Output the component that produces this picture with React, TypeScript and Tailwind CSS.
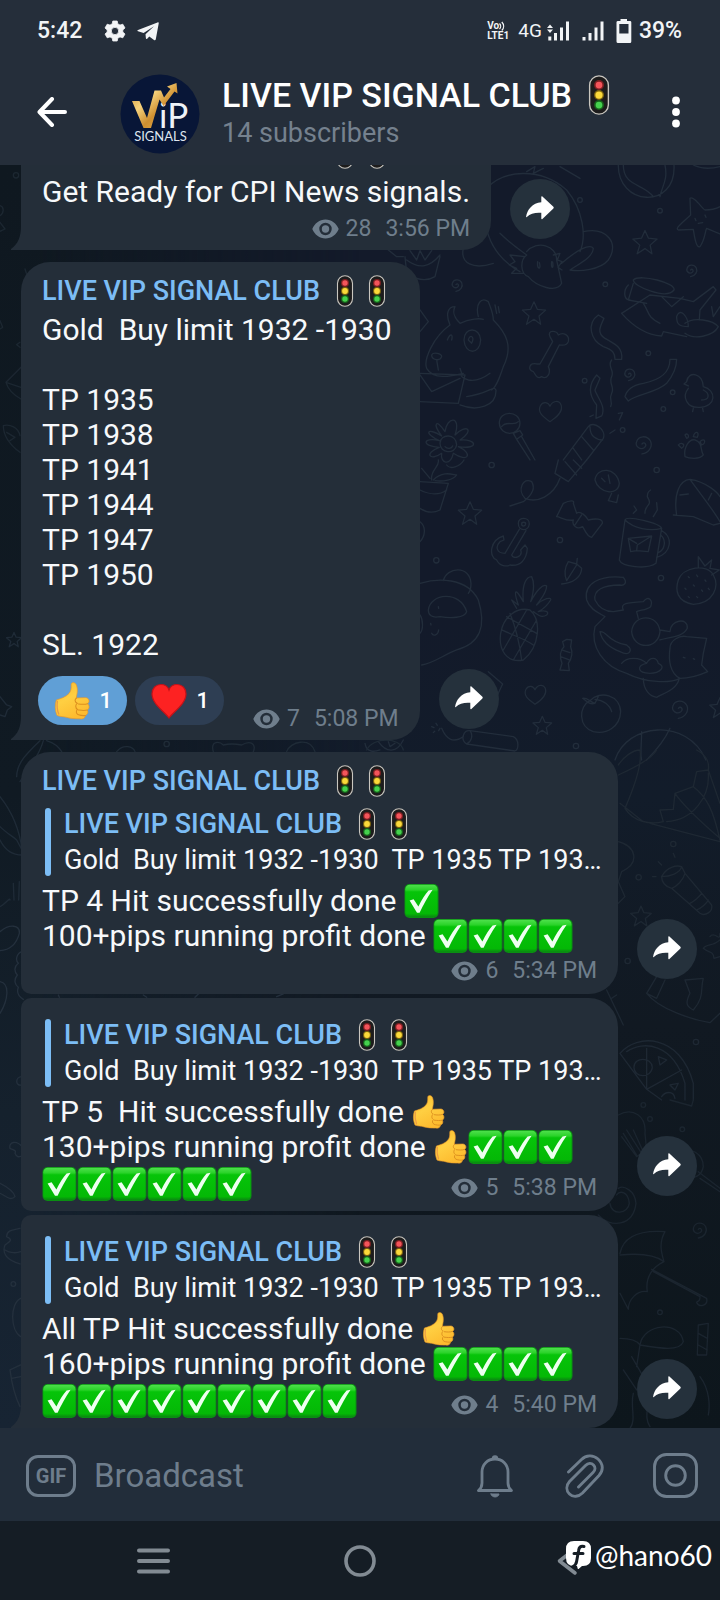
import type { ReactNode } from "react";

const CHANNEL = "LIVE VIP SIGNAL CLUB";

/* ---------- emoji ---------- */

const TrafficLight = ({ className }: { className: string }) => (
  <svg viewBox="0 0 32 32" className={className} role="img" aria-label="traffic light">
    <rect x="8.5" y="0.7" width="15" height="30.6" rx="7.5" fill="#1d1c1c" stroke="#c9c6bf" strokeWidth="1.1" />
    <circle cx="16" cy="8" r="4" fill="#7c1f22" />
    <circle cx="16" cy="8" r="2.7" fill="#f4545a" />
    <circle cx="16" cy="16" r="4" fill="#7d6410" />
    <circle cx="16" cy="16" r="2.9" fill="#fbd93a" />
    <circle cx="16" cy="24" r="4" fill="#17611b" />
    <circle cx="16" cy="24" r="2.7" fill="#45d14d" />
  </svg>
);

const Check = () => (
  <svg viewBox="0 0 35 34" className="inline-block h-[34px] w-[35px] align-[-7px]" role="img" aria-label="check mark">
    <defs>
      <linearGradient id="check-fill" x1="0" y1="0" x2="0" y2="1">
        <stop offset="0" stopColor="#4ee04c" />
        <stop offset="0.16" stopColor="#2ad329" />
        <stop offset="0.22" stopColor="#06c409" />
        <stop offset="0.9" stopColor="#04b806" />
        <stop offset="1" stopColor="#0a8a10" />
      </linearGradient>
    </defs>
    <rect x="0.5" y="0" width="34" height="34" rx="5" fill="#0a8f12" />
    <rect x="1.3" y="0.8" width="32.2" height="32" rx="4.5" fill="url(#check-fill)" />
    <path d="M5.6 16.6 9.6 15.2 14.4 22.6C17.6 15.8 21 10.6 24.6 6.6L28.6 5.8C23.6 13 19.4 20.6 15.6 28.8L13 28.8Z" fill="#eefff0" />
  </svg>
);

const ThumbsUp = ({ className = "inline-block h-[34px] w-[35px] align-[-7px]" }: { className?: string }) => (
  <svg viewBox="-1 -1 107 112" className={className} role="img" aria-label="thumbs up">
    <defs>
      <linearGradient id="thumb-fill" x1="0" y1="0" x2="0.5" y2="1">
        <stop offset="0" stopColor="#f9b92c" />
        <stop offset="0.5" stopColor="#ffcf42" />
        <stop offset="1" stopColor="#fdbb2f" />
      </linearGradient>
    </defs>
    <path
      d="M6 52C18 48 34 44 44 32C51 24 50 14 50 7C50 -2 62 -2 66 8C71 22 67 36 65 46L93 45C103 45 107 58 99 63C105 67 105 78 98 82C102 88 99 96 92 98C92 106 84 110 76 108C62 108 48 107 38 104C28 101 18 102 8 98C2 84 1 66 6 52Z"
      fill="url(#thumb-fill)"
      stroke="#e8962a"
      strokeWidth="2"
    />
    <path d="M99 63C90 66 80 65 72 64M98 82C90 84 80 83 72 82M92 98C86 99 78 98 72 96M66 46C60 50 60 58 68 62C62 66 62 76 69 80C64 84 64 92 70 95" fill="none" stroke="#dc8f1f" strokeWidth="3.2" strokeLinecap="round" />
    <path d="M9 56C7 70 9 84 13 94" fill="none" stroke="#e99a45" strokeWidth="4" strokeLinecap="round" />
  </svg>
);

const Heart = () => (
  <svg viewBox="0 0 36 36" className="h-9 w-9" role="img" aria-label="heart">
    <path d="M18 35C14 29 1 21 1 11C1 5 5 1.500 10 1.500C14 1.500 17 4 18 7C19 4 22 1.500 26 1.500C31 1.500 35 5 35 11C35 21 22 29 18 35Z" fill="#fd2222" stroke="#c41218" strokeWidth="1.2" />
  </svg>
);

/* ---------- wallpaper ---------- */

const star = "M0-13 4-4 14-3 6 4 8 14 0 8-9 14-6 4-14-3-4-4Z";
const spiral = "M0 0C5-6 11 2 5 7C-3 13-14 5-11-4C-7-17 10-18 17-6C22 5 14 18 0 20";
const heart = "M0 22C-14 12-24 4-18-8C-13-17-3-15 0-7C5-18 17-19 21-9C25 4 12 14 0 22Z";

const Wallpaper = () => (
  <svg
    viewBox="0 165 720 1263"
    preserveAspectRatio="xMaxYMin slice"
    className="pointer-events-none absolute inset-0 h-full w-full"
    fill="none"
    stroke="#222d3b"
    strokeWidth="4"
    strokeLinejoin="round"
    strokeLinecap="round"
    aria-hidden="true"
  >
    <g transform="translate(360 160) scale(.3333)">
      {/* turtle */}
      <path d="M380 85C430 30 540 20 620 90C670 150 680 230 660 275M500 35 525 20 520 40 550 25M600 20 660 55M380 85C360 180 380 280 480 335M310 265C300 310 340 330 400 310M670 215C740 200 780 250 745 300C720 330 660 335 630 330C660 310 700 290 700 265C690 250 650 270 605 310M420 220C450 250 480 270 500 285M500 275C530 240 590 255 590 300L605 370C590 400 530 380 505 350C480 340 480 300 500 285M495 290 450 285 465 305 448 315 470 325 455 340 490 340M580 285 600 280 592 300 606 305 594 322 606 330M533 305C530 330 545 330 538 308M575 305C572 328 582 328 578 306" />
      {/* ball, starfish, jar fish */}
      <path d="M775 10C770 140 950 150 942 15M790 15C790 80 850 70 880 110M915 15C925 60 905 80 900 110M1000 15C1030 30 1060 25 1080 20" />
      <path d="M990 115C1000 105 1030 150 1035 150C1060 150 1080 140 1080 140M990 115 992 165C960 195 945 205 955 210L1000 208C1005 240 1010 265 1020 260C1035 240 1035 215 1040 205L1080 222M1005 175 1008 182M1035 165 1038 172M1015 190 1028 188" />
      <path d="M820 360C840 340 950 370 942 390C920 420 820 380 820 360ZM820 370 805 420 860 430M805 375C790 390 790 420 810 420M785 460 870 405 960 415 1000 425 1060 380 1068 390 1020 450 1018 480M785 460C820 500 860 525 905 528L910 515 980 530M850 430C870 460 860 470 900 490M950 470C960 440 985 470 985 500 955 500 950 490 950 470ZM975 490C1000 470 1060 480 1075 500 1060 530 1000 540 975 520M905 410 935 440 970 410M1055 440 1060 470 1080 440" />
      {/* bear */}
      <path d="M270 495C255 460 265 440 285 440C275 460 285 475 300 490M270 495C220 530 190 600 200 625C220 660 270 650 310 640M355 470C345 430 365 410 385 425C395 450 400 460 400 480C440 520 460 560 430 620C420 650 410 680 395 690M300 490C330 475 360 475 370 478M215 585C220 575 245 580 245 590 240 605 215 600 215 585ZM230 600 235 630M312 540C312 500 360 500 362 540 360 585 315 585 312 540ZM325 540C330 520 345 530 335 550ZM262 540C270 520 280 520 275 540M300 625 305 640C300 650 310 655 325 660C350 665 370 655 390 640M180 640 315 645 295 730 180 725M180 645 215 695 300 655M300 735C350 755 410 740 408 690 400 675 390 700 320 710M180 450 205 485 180 515M405 435 410 460M415 440 418 458" />
      {/* bone, heart, streamers */}
      <path d="M570 530C560 510 590 510 595 525C610 515 630 525 625 545C620 560 605 555 598 555L565 620C575 640 560 660 545 650C530 660 525 640 520 635C500 630 510 605 530 612L540 612 578 545Z" />
      <path d="M715 465C680 490 690 540 730 560C760 570 765 580 765 598L785 598C790 560 760 550 735 535C710 520 720 500 732 475ZM930 598C930 640 900 660 850 670C820 675 800 690 795 710L805 723C830 700 890 700 920 670C945 640 950 620 950 598ZM710 645C680 680 690 710 710 735L708 775 725 768C740 740 710 710 705 690L720 655ZM755 600C740 620 765 630 755 650C745 670 765 680 755 700C745 720 760 725 752 740M775 760 788 758 778 780M690 770 700 765M750 820 765 810" />
      <path d="M980 665C985 630 1030 640 1030 680C1070 690 1070 740 1020 742C980 745 965 710 985 685M980 665 972 672 985 678M1000 745 998 755M1028 745 1030 755M1030 690C1050 700 1050 720 1025 720" />
      {/* flower, lollipop, firecracker, paw */}
      <path d="M240 850C240 820 290 820 290 855 285 885 240 880 240 850ZM245 828C215 790 230 775 255 815 260 770 305 765 285 825 320 790 345 810 300 840 350 835 360 870 295 860 340 880 325 910 280 880 270 920 240 910 245 880 210 905 190 880 238 862 185 860 185 830 238 842 190 820 200 800 245 828ZM255 860C262 868 275 866 278 858" />
      <path d="M418 790C418 750 478 750 480 790 478 830 420 830 418 790ZM425 800C440 780 460 800 475 785M460 820 480 812 488 825 470 838ZM470 838 510 900M485 830 525 900M610 900 685 800C700 780 740 810 730 835L680 900M640 865 665 900M665 830 700 870M690 800C690 830 710 840 728 840" />
      <path d="M975 890C970 860 990 835 1005 840C1030 850 1020 870 1030 885C1020 900 985 895 975 890ZM955 855C965 845 980 855 965 865ZM975 825C985 815 990 835 980 835ZM1000 830C1005 810 1020 815 1012 832ZM1020 845C1035 830 1040 850 1025 855Z" />
      <path d="M85 270 110 290 130 290M135 290 140 340C170 360 200 365 225 350L240 290M140 300C180 330 210 320 240 285M150 272 170 300 180 272 195 300 215 272" />
      <path transform="translate(855 245) scale(2.600)" d={star} strokeWidth="1.500" />
      <path transform="translate(522 458) scale(2.500)" d={star} strokeWidth="1.500" />
      <path transform="translate(570 750) scale(1.600)" d={heart} strokeWidth="2.300" />
      <path transform="translate(288 374)" d={spiral} />
      <path transform="translate(992 330)" d={spiral} />
      <path transform="translate(806 642)" d={spiral} />
      <path transform="translate(846 852) scale(1.500)" d={spiral} strokeWidth="2.600" />
      {[[660, 120], [900, 152], [736, 373], [865, 580], [674, 662], [910, 747], [938, 697], [788, 810]].map(([x, y]) => (
        <circle key={`${x}-${y}`} cx={x} cy={y} r="7" />
      ))}
    </g>
    <g transform="translate(360 460) scale(.3333)">
      {/* cactus pot, firecracker tail, fish, shell */}
      <path d="M180 65 265 70 240 150C220 160 200 158 180 145M180 90C210 105 240 105 260 90M215 60C210 30 240 20 235 0M220 60C250 30 280 45 290 45 280 60 250 65 225 62M210 55 185 25M260 15C270 30 300 20 312 0M180 185C200 200 195 230 180 245" />
      <path d="M595 0 585 40 625 65 680 0M615 5 650 45M640 0 665 25M600 55C580 110 530 130 495 115C470 90 490 50 515 65C530 90 510 110 490 125L450 138" />
      <path d="M705 60C710 20 770 20 778 70 775 110 715 100 705 60ZM755 100 745 122 770 128 775 105M725 55 735 65M745 45 750 70M950 165C940 100 960 60 990 58C1040 65 1075 100 1080 110M990 58C1020 100 1060 150 1080 185M940 165 1000 170 1060 195 1080 190M960 105 985 102M1045 120 1055 100" />
      {/* anchor, bow, mug */}
      <path d="M475 190C475 170 508 170 508 192 505 215 475 215 475 190ZM485 192C485 185 497 185 497 192 496 200 485 200 485 192ZM478 208 435 280C410 280 405 260 420 245L432 240 430 228C390 240 385 290 410 300C420 320 440 320 450 315 480 320 500 300 502 265L495 255 482 270C490 290 460 300 455 285L498 212" />
      <path d="M590 170 610 130C630 120 645 120 640 130L650 160C660 150 680 170 685 180 705 175 730 175 727 190L695 232C680 230 675 210 668 200 650 210 635 195 640 180 620 185 600 170 590 170ZM665 165 645 195" />
      <path d="M795 180C800 165 900 190 905 205L888 310C860 330 785 320 778 300ZM795 180C820 205 870 215 905 205M905 212C940 230 935 280 890 292M902 225C920 240 915 270 895 278M805 235 875 228 865 275 830 272 812 275ZM830 272 832 255 875 228M805 235 830 250M820 160 830 150 822 138M855 160C855 130 880 140 862 110 862 95 868 92 872 90M880 170 892 150 890 128" />
      {/* panda, leaf, pineapple */}
      <path d="M180 370C230 355 320 350 355 420C380 500 360 550 290 570 250 585 220 610 185 615M250 362C260 320 330 315 333 370 333 390 330 395 325 400M205 450C210 400 300 390 320 455 315 475 270 475 240 470 215 475 205 465 205 450ZM180 465C190 480 190 510 180 520M215 520C220 530 235 525 236 510M235 440 236 445M212 490 213 495" />
      <path d="M605 372C640 370 665 350 665 325L650 312 652 295M650 312 625 305C610 330 615 350 620 362L650 315" />
      <path d="M422 520C430 470 470 440 510 450 545 480 540 560 490 600 440 610 415 570 422 520ZM440 470 530 520M425 510C470 530 500 540 520 555M450 460C470 510 480 560 485 600M500 450 430 570M530 480 460 600M470 445 455 420 475 435C460 390 465 380 490 425 485 370 500 350 515 350 525 370 520 400 512 425 530 390 550 370 560 378 560 400 540 420 530 435 550 415 575 410 572 420 560 440 545 450 535 455 555 450 570 455 560 465 545 475 535 465 520 455" />
      {/* strawberry, cat */}
      <path d="M955 360C970 320 1040 310 1060 345 1080 380 1060 430 1000 433 950 425 945 390 955 360ZM1015 322 1015 290 1035 318 1055 300 1050 325 1078 330 1055 345M985 350 988 353M1010 345 1013 350M1035 360 1038 364M975 385 978 388M1000 375 1003 378M1025 390 1028 394M1045 385 1048 389M985 410 988 413M1010 410 1013 413" />
      <path d="M790 352C720 345 670 370 680 420C690 450 720 460 735 470L705 500C690 560 730 620 800 640C860 670 930 670 960 655M790 352C805 370 790 378 780 375 730 375 700 390 705 420 720 450 745 455 760 455L790 450C780 430 800 428 850 425 865 405 880 420 872 440 860 450 840 450 830 455L835 475M720 515C740 510 740 545 800 555 820 570 810 590 780 575 740 560 725 540 720 515ZM815 515C820 460 895 460 900 515 895 570 820 570 815 515ZM900 510 930 515C930 480 985 470 982 505 970 530 935 530 900 540M930 565C930 540 960 525 980 530L1040 535 1030 580 1025 615 1043 635C1010 650 980 655 960 655 930 640 925 600 930 565ZM850 655C850 690 870 710 890 712 910 700 950 690 958 655M860 610C870 590 890 590 895 610 920 620 900 640 870 640 830 640 830 615 860 610ZM785 610C800 590 840 590 860 610M970 592 975 594M1000 596 1004 598" />
      {/* candy, heart, peach, beach ball, scroll */}
      <path d="M608 545 620 538 635 540 632 560C640 580 632 600 625 610L628 632 600 630 606 610C598 590 600 570 612 560ZM605 570 630 578M602 590 628 600M690 722C720 690 780 705 782 755 780 800 740 825 700 815 655 800 655 740 690 722ZM705 730C690 725 680 712 668 715 680 725 690 735 705 730ZM705 730 715 710M705 718C730 720 750 735 755 755M765 900C800 790 980 770 1038 900M845 815C845 850 840 880 845 900M930 805C910 850 880 880 860 900" />
      <path d="M330 812 460 830C480 840 475 870 465 873L320 852C300 840 310 810 330 812ZM330 812C340 825 335 845 320 852M310 830C280 850 260 840 245 805M385 635 428 672 405 720M215 800 222 803M228 790 232 796M240 805 236 812M220 818 224 814M15 850C20 880 45 875 60 870M55 845C80 880 110 880 130 840M85 845 90 860 105 850" />
      <path transform="translate(330 158) scale(2.500)" d={star} strokeWidth="1.500" />
      <path transform="translate(547 795) scale(2)" d={star} strokeWidth="1.900" />
      <path transform="translate(1080 742) scale(2.200)" d={star} strokeWidth="1.800" />
      <path transform="translate(525 700) scale(1.500)" d={heart} strokeWidth="2.500" />
      <path transform="translate(955 745) scale(1.500)" d={spiral} strokeWidth="2.600" />
      {[[395, 15], [890, 30], [600, 240], [229, 301], [903, 354], [648, 858]].map(([x, y]) => (
        <circle key={`${x}-${y}`} cx={x} cy={y} r="8" />
      ))}
    </g>
    <g transform="translate(360 750) scale(.3333)" stroke="#1e2833">
      {/* parachute, torch, picture, pizza */}
      <path d="M775 45C790 20 820 0 840 0M840 0C850 50 810 140 795 175C820 215 870 225 910 215L900 180 940 178 945 130 1000 110 1010 65 1045 60C1050 30 1030 10 1010 0M775 75C830 50 880 20 890 0M1000 110C1040 140 1060 180 1080 270M1045 60 1080 160M945 130C980 180 1040 230 1080 265M870 220 1080 275M780 160 850 215M1045 70C1050 140 1000 210 920 215" />
      <path d="M905 380C920 350 950 345 965 350L975 370 1055 465C1060 485 1035 500 1020 490L935 415C915 410 905 395 905 380ZM905 380C930 380 960 370 965 350M935 415C950 410 970 390 975 370M990 460C1000 455 1020 440 1025 430M1010 480C1025 475 1040 460 1045 450M895 335 905 345M940 310 945 322M878 380 888 380" />
      <path d="M775 275C830 290 840 340 785 365L775 395 795 440 775 460M890 680 860 730C900 780 1000 810 1050 818L1080 790M860 730 890 745 915 690M975 690 1030 685C1020 720 1035 740 1000 780 980 770 975 760 990 730ZM1050 560C1065 540 1080 580 1080 550M1030 595C1040 580 1060 590 1080 570M1030 595C1045 610 1060 600 1062 625L1080 620M740 720 790 825M745 770 770 820M755 745 770 735" />
      <path d="M780 910C830 850 960 850 1000 1000L1000 1050M800 905C850 870 940 880 975 1000L975 1050M780 910 860 1018 965 960M860 895 860 1018M822 952C822 920 875 920 877 952 875 985 822 985 822 952ZM895 920 920 930 900 945ZM930 1005 955 1000 945 1020ZM860 1018 905 1050M905 1040C915 1025 940 1020 945 1045" />
      <path transform="translate(843 497) scale(2.200)" d={star} strokeWidth="1.800" />
      {[[940, 282], [836, 382], [803, 633], [1008, 876]].map(([x, y]) => (
        <circle key={`${x}-${y}`} cx={x} cy={y} r="8" />
      ))}
    </g>
    <g transform="translate(360 1100) scale(.3333)" stroke="#1b252f">
      {/* shuttlecock, magnifier, umbrella, palm */}
      <path d="M775 45C820 20 860 50 855 100L860 150 830 170 785 110M790 100 830 165M800 90 845 160M820 90 850 155M930 0 995 18 1000 0M960 155C990 140 1030 160 1030 200 1025 230 1000 235 985 230M1015 215 1080 265M1020 235 1080 275M715 345C750 385 820 380 828 310 825 270 790 255 775 265M750 310C755 350 805 340 808 310 805 275 780 270 770 285" />
      <path d="M780 460C790 410 840 390 915 395C895 430 905 460 912 485C880 500 855 530 862 575 830 570 805 600 805 628L780 580M780 465C830 460 880 460 912 485M880 515 1020 590C1020 610 1010 600 1010 608 1020 625 1045 615 1040 595L875 508M780 715C810 715 830 720 840 735C850 670 960 660 970 725 960 755 900 745 840 735M840 735 830 800M790 810 830 870M815 770 850 830M820 880C810 920 830 960 810 985M860 880C870 920 850 950 870 980M1020 830C1050 870 1050 920 1045 945M1015 675 1045 670 1040 765 1012 765ZM1015 700 1042 715M1015 735 1042 750" />
      <path transform="translate(1015 388) scale(1.300)" d={spiral} strokeWidth="3" />
      {[[870, 57], [967, 88], [900, 637], [850, 15]].map(([x, y]) => (
        <circle key={`${x}-${y}`} cx={x} cy={y} r="7" />
      ))}
    </g>
    {/* left edge */}
    <g transform="translate(0 160) scale(.3333)" stroke="#1c2731">
      <path d="M0 145C15 150 10 170 0 175M0 195 15 215 0 222M63 630 18 675C25 700 45 715 63 725M18 675 63 690M10 805C30 800 55 810 60 835M10 805C10 840 40 870 60 885M20 825 45 840 30 850M0 490 8 510 0 515M60 555 50 562 60 570M75 335C90 400 180 400 190 335M265 345C280 320 340 320 348 345M580 345C600 320 625 325 630 345M950 335 960 345M712 335 725 345" transform="translate(0 -8)" />
      <circle cx="48" cy="46" r="8" />
    </g>
    <g transform="translate(0 620) scale(.3333)" stroke="#1f2b37">
      <path d="M0 230 20 255 35 260 22 270 15 290 0 285M50 470C50 430 80 400 120 362M60 485C90 440 120 400 130 362M185 395C170 370 150 365 140 362M350 395C370 370 400 380 405 395M640 395C630 360 660 365 670 375 690 370 710 372 725 375 750 360 770 370 760 395M860 395C870 365 930 350 945 395M1100 390C1120 350 1200 350 1210 390M0 530C40 580 60 640 66 690M0 620C20 640 40 650 50 660L66 690M0 660C20 700 50 705 66 705M40 790 42 840M58 785 56 840M0 860C20 850 30 830 30 840" />
      <path transform="translate(42 58) scale(1.600)" d={star} strokeWidth="2.400" />
      <circle cx="500" cy="372" r="8" />
    </g>
    <g transform="translate(0 900) scale(.3333)" stroke="#24303d">
      <path d="M0 95C30 70 60 75 58 100 50 130 30 150 0 152M66 155C50 160 45 180 55 190 42 200 42 215 52 225 40 240 45 255 55 262 48 280 60 292 70 298M0 245C30 250 25 300 0 340M66 530C45 530 45 560 66 555M66 740C50 720 25 725 30 745 40 750 50 750 45 760 50 775 60 770 66 768M0 850C10 855 40 870 45 890 30 905 15 885 0 880M175 285 178 292M430 285 440 292M595 282 585 292M830 290 850 282" />
      <path d="M60 985C40 990 20 990 20 1010 40 1020 30 1025 15 1035 5 1060 20 1080 60 1092M15 1050C30 1060 50 1060 62 1055M62 1195C30 1210 30 1290 62 1310M30 1410 62 1395M30 1410C35 1450 45 1490 60 1520M35 1435 62 1430" />
      <circle cx="40" cy="1152" r="7" />
    </g>
  </svg>
);

/* ---------- message parts ---------- */

const Author = ({ scrolledOff }: { scrolledOff?: boolean }) => (
  <div className="flex h-8 items-center gap-[9px] text-[27px] leading-8 font-medium text-[#7cbdf5]">
    <span className={`truncate ${scrolledOff ? "invisible" : ""}`}>{CHANNEL}</span>
    <span className="flex shrink-0">
      <TrafficLight className="h-8 w-8" />
      <TrafficLight className="h-8 w-8" />
    </span>
  </div>
);

const Quote = () => (
  <blockquote className="-mr-2 mb-[7px] ml-[3px] flex h-[68px] gap-[13px]">
    <div className="w-1.5 shrink-0 rounded-full bg-[#7cbdf5]" />
    <div className="flex min-w-0 flex-1 flex-col justify-between">
      <Author />
      <p className="truncate text-[27px] leading-8 whitespace-pre">
        {"Gold  Buy limit 1932 -1930  TP 1935 TP 193…"}
      </p>
    </div>
  </blockquote>
);

const Meta = ({ views, time }: { views: number; time: string }) => (
  <div className="flex shrink-0 items-center justify-end text-[23px] leading-7 text-[#6f7e8c]">
    <svg viewBox="0 0 27 20" className="mr-[7px] h-5 w-[27px]" role="img" aria-label="views">
      <path fillRule="evenodd" d="M13.500 0.500C7.500 0.500 2.500 4.400 0.300 10C2.500 15.600 7.500 19.500 13.500 19.500C19.500 19.500 24.500 15.600 26.700 10C24.500 4.400 19.500 0.500 13.500 0.500ZM13.500 3.800A6.200 6.200 0 1 1 13.500 16.200A6.200 6.200 0 1 1 13.500 3.800Z" fill="currentColor" />
      <circle cx="13.500" cy="10" r="3.700" fill="currentColor" />
    </svg>
    <span className="mr-3.5">{views}</span>
    <time>{time}</time>
  </div>
);

const Reaction = ({ active, count, children }: { active?: boolean; count: number; children: ReactNode }) => (
  <button
    type="button"
    className={`flex h-[49px] w-[89px] items-center justify-between rounded-full pr-[15px] pl-4 text-[22px] font-medium text-white ${
      active ? "bg-[#609fd6]" : "bg-[#2e3e53]"
    }`}
  >
    {children}
    <span>{count}</span>
  </button>
);

const Checks = ({ count }: { count: number }) => (
  <>
    {Array.from({ length: count }, (_, i) => (
      <Check key={i} />
    ))}
  </>
);

interface MessageProps {
  shape: string;
  tail?: boolean;
  wide?: boolean;
  shareMargin?: string;
  children: ReactNode;
}

const Message = ({ shape, tail, wide, shareMargin = "mb-[11px]", children }: MessageProps) => (
  <article className="flex shrink-0 items-end gap-[19px]">
    <div className={`relative min-w-0 bg-[#242e39] px-[21px] ${wide ? "flex-1" : ""} ${shape}`}>
      {tail && (
        <svg viewBox="0 0 11 24" className="absolute bottom-0 -left-2.5 h-6 w-[11px]" aria-hidden="true">
          <path d="M11 0V24H0V23C7 18 10 11 10 0Z" fill="#242e39" />
        </svg>
      )}
      {children}
    </div>
    <button
      type="button"
      aria-label="Share"
      className={`flex h-[60px] w-[60px] shrink-0 items-center justify-center rounded-full bg-[#25313c] ${shareMargin}`}
    >
      <svg viewBox="0 0 28 24" className="-mt-0.5 h-6 w-7" aria-hidden="true">
        <path d="M15.300 0.800C15.300 0.200 15.900 0 16.400 0.400L27.400 10.800C27.900 11.300 27.900 11.900 27.400 12.400L16.400 23C15.900 23.400 15.300 23.200 15.300 22.600V16.800C9 16.400 4.500 17.400 0.800 21C0.500 21.300 0 21.200 0.100 20.700C1 13.800 6.500 6.800 15.300 6.200Z" fill="#fff" />
      </svg>
    </button>
  </article>
);

/* ---------- bars ---------- */

const StatusBar = () => (
  <div className="flex h-[62px] items-center justify-between pr-[38px] pl-[37px] text-[23px] font-medium text-[#f2f4f6]">
    <div className="flex items-center">
      <span>5:42</span>
      <svg viewBox="0 0 24 24" className="ml-[21px] h-6 w-6" aria-hidden="true">
        <path
          fillRule="evenodd"
          d="M9.800 2H14.200L14.800 4.900L17 6.100L19.800 5.200L22 9L19.800 10.900V13.100L22 15L19.800 18.800L17 17.900L14.800 19.100L14.200 22H9.800L9.200 19.100L7 17.900L4.200 18.800L2 15L4.200 13.100V10.900L2 9L4.200 5.200L7 6.100L9.200 4.900ZM12 8.300A3.700 3.700 0 1 0 12 15.700A3.700 3.700 0 1 0 12 8.300Z"
          fill="currentColor"
          stroke="currentColor"
          strokeWidth="0.800"
          strokeLinejoin="round"
        />
      </svg>
      <svg viewBox="0 0 22 19" className="ml-2.5 h-[19px] w-[22px]" aria-hidden="true">
        <path d="M20.500 0.400C21.300 0.100 21.900 0.600 21.700 1.500L18.800 17.300C18.600 18.300 17.800 18.600 17 18L12.300 14.500L10.200 16.700C9.600 17.300 9 17.100 8.900 16.300L8.500 12.300L17 4.200L6.600 11L1 9.300C0.200 9 0.200 8.400 1 8.100Z" fill="currentColor" />
      </svg>
    </div>
    <div className="flex items-center">
      <div className="w-6 text-[10px] leading-[10px] font-bold">
        <div className="flex items-center">
          Vo
          <svg viewBox="0 0 8 10" className="h-2.5 w-2" fill="none" stroke="currentColor" strokeWidth="1.300" aria-hidden="true">
            <path d="M0.500 2.500C2 4 2 6.500 0.500 8M2.800 1C5.200 3.500 5.200 7 2.800 9.500" />
          </svg>
        </div>
        <div>LTE1</div>
      </div>
      <span className="ml-[7px] text-[19px] font-normal">4G</span>
      <svg viewBox="0 0 22 20" className="ml-[5px] h-5 w-[22px]" fill="currentColor" aria-hidden="true">
        <path d="M3 3.500 6 7H0ZM3 12 0 8.500H6ZM1.300 15.500H4.300V19.500H1.300ZM7 12H10V19.500H7ZM13 6.500H16V19.500H13ZM19 0.500H22V19.500H19Z" />
      </svg>
      <svg viewBox="0 0 22 20" className="ml-[13px] h-5 w-[22px]" fill="currentColor" aria-hidden="true">
        <path d="M0.500 16H3.500V19.500H0.500ZM6.500 12H9.500V19.500H6.500ZM12.500 6.500H15.500V19.500H12.500ZM18.500 0.500H21.500V19.500H18.500Z" />
      </svg>
      <svg viewBox="0 0 16 24" className="ml-3 h-6 w-4" fill="currentColor" aria-hidden="true">
        <path fillRule="evenodd" d="M4.500 0H11V2H14Q15.300 2 15.300 3.300V22.500Q15.300 24 14 24H2Q0.500 24 0.500 22.500V3.300Q0.500 2 2 2H4.500ZM3.300 5V14.500H12.500V5Z" />
      </svg>
      <span className="ml-[7px]">39%</span>
    </div>
  </div>
);

const Avatar = () => (
  <svg viewBox="0 0 80 80" className="h-20 w-20 shrink-0" role="img" aria-label="VIP Signals">
    <defs>
      <linearGradient id="gold" x1="0" y1="0" x2="1" y2="1">
        <stop offset="0" stopColor="#c98a2e" />
        <stop offset="0.35" stopColor="#f6d27c" />
        <stop offset="0.6" stopColor="#cf8f30" />
        <stop offset="1" stopColor="#eebc5a" />
      </linearGradient>
    </defs>
    <circle cx="40" cy="40" r="39.500" fill="#081637" />
    <text x="39" y="54" fill="#eef2f8" fontFamily="Lato, sans-serif" fontSize="35">iP</text>
    <path d="M12 27H19.500L27 44L34.500 16.500H41L44 23.500L50.500 15L47 12.500L56.500 9L57.500 19.500L54.500 17.500L43.500 32L39.500 25.500L31 54H23.500Z" fill="url(#gold)" />
    <text x="40.500" y="67" textAnchor="middle" fill="#dfe5ef" fontFamily="Lato, sans-serif" fontSize="13">SIGNALS</text>
  </svg>
);

const Header = () => (
  <header className="shrink-0 bg-[#252e3a]">
    <StatusBar />
    <div className="flex h-[103px] items-center pr-10 pb-[3px] pl-[37px]">
      <button type="button" aria-label="Back" className="shrink-0">
        <svg viewBox="0 0 30 30" className="h-[30px] w-[30px]" fill="none" stroke="#fff" strokeWidth="4" strokeLinecap="round" strokeLinejoin="round">
          <path d="M15 2 2.500 15 15 28M3 15H28" />
        </svg>
      </button>
      <div className="ml-[53px] shrink-0 pt-[3px]">
        <Avatar />
      </div>
      <div className="ml-[22px] flex min-w-0 flex-1 flex-col gap-0.5">
        <h1 className="flex h-10 items-center text-[34px] leading-10 font-medium text-white">
          <span className="truncate">{CHANNEL}</span>
          <TrafficLight className="ml-[7px] h-10 w-10 shrink-0" />
        </h1>
        <p className="text-[27px] leading-8 text-[#75818e]">14 subscribers</p>
      </div>
      <button type="button" aria-label="More options" className="shrink-0">
        <svg viewBox="0 0 8 32" className="h-8 w-2" fill="#fff">
          <circle cx="4" cy="4.500" r="3.900" />
          <circle cx="4" cy="16" r="3.900" />
          <circle cx="4" cy="27.500" r="3.900" />
        </svg>
      </button>
    </div>
  </header>
);

const Composer = () => (
  <footer className="flex h-[93px] shrink-0 items-center bg-[#222d3a] pt-0.5 pr-[22px] pl-[26px] text-[#6e7d8c]">
    <button type="button" className="h-[42px] w-[50px] shrink-0 rounded-[12px] border-3 border-[#6e7d8c] text-[20px] leading-none font-bold">
      GIF
    </button>
    <input
      type="text"
      aria-label="Broadcast"
      placeholder="Broadcast"
      className="ml-[18px] min-w-0 flex-1 bg-transparent text-[33px] text-white outline-none placeholder:text-[#6e7d8c]"
    />
    <button type="button" aria-label="Notifications" className="shrink-0">
      <svg viewBox="0 0 38 44" className="h-11 w-[38px]" fill="none" stroke="currentColor" strokeWidth="2.800" strokeLinejoin="round" strokeLinecap="round">
        <path d="M2.500 36.500H35.500C32.500 34 32 32 32 29V18C32 10.500 26.500 5 19 5C11.500 5 6 10.500 6 18V29C6 32 5.500 34 2.500 36.500Z" />
        <path d="M16.500 4.500C16.500 1 21.500 1 21.500 4.500Z" fill="currentColor" strokeWidth="1.500" />
        <path d="M15 40H23C22.500 44 15.500 44 15 40Z" fill="currentColor" strokeWidth="1" />
      </svg>
    </button>
    <button type="button" aria-label="Attach" className="ml-[51px] shrink-0">
      <svg viewBox="0 0 40 44" className="h-11 w-10" fill="none" stroke="currentColor" strokeWidth="2.900" strokeLinejoin="round" strokeLinecap="round">
        <path d="M3.500 18 16.500 5.500C21 1 28 0.500 33 5C38.500 10 38.500 16.500 34 21.500L17.500 39C13.500 43 8 43.500 4.500 40C1 36.500 1 31.500 4.500 27.500L20.500 11.500C23 9 26.500 9 28.500 11C30.500 13 30.500 16 28 18.500L13.500 33" />
      </svg>
    </button>
    <button type="button" aria-label="Record video" className="ml-12 shrink-0">
      <svg viewBox="0 0 45 45" className="h-[45px] w-[45px]" fill="none" stroke="currentColor" strokeWidth="2.900">
        <rect x="1.500" y="1.500" width="42" height="42" rx="12" />
        <circle cx="22.500" cy="22.500" r="9.800" />
      </svg>
    </button>
  </footer>
);

const NavBar = () => (
  <nav className="relative flex h-[79px] shrink-0 items-center justify-between bg-[#151d25] px-[136px] text-[#828b93]">
    <button type="button" aria-label="Recent apps">
      <svg viewBox="0 0 34 34" className="h-[34px] w-[34px]" fill="none" stroke="currentColor" strokeWidth="4" strokeLinecap="round">
        <path d="M3 6.500H32M3 17H32M3 27.500H32" />
      </svg>
    </button>
    <button type="button" aria-label="Home">
      <svg viewBox="0 0 34 34" className="h-[34px] w-[34px]" fill="none" stroke="currentColor" strokeWidth="3.600">
        <circle cx="17" cy="17" r="14" />
      </svg>
    </button>
    <button type="button" aria-label="Back">
      <svg viewBox="0 0 34 34" className="h-[34px] w-[34px]" fill="none" stroke="currentColor" strokeWidth="3.600" strokeLinejoin="round" strokeLinecap="round">
        <path d="M25 5 9.500 17 25 29" />
      </svg>
    </button>
    <div className="absolute top-4 right-2 flex items-end gap-1 text-[28px] leading-9 text-white">
      <svg viewBox="0 0 25 28" className="mb-1 h-7 w-[25px]" aria-hidden="true">
        <path d="M8 0H17Q25 0 25 8V17Q25 25 17 25H16L12 28.500L11 25H8Q0 25 0 17V8Q0 0 8 0Z" fill="#fff" />
        <path d="M18 5.500C14.500 4.500 13 6.500 12.600 9.500L10.600 20.500C10.200 23 9 24.500 7 25.500M8 12.500H17" fill="none" stroke="#151d25" strokeWidth="3" strokeLinecap="round" />
      </svg>
      <span className="font-['Lato','Noto_Sans',sans-serif]">@hano60</span>
    </div>
  </nav>
);

export default function App() {
  return (
    <div className="flex h-screen flex-col bg-[#151d25] font-['Roboto','Noto_Sans',sans-serif]">
      <Header />

      <main className="relative flex min-h-0 flex-1 flex-col justify-end overflow-hidden bg-[linear-gradient(180deg,#131a2a_0%,#131a2a_36%,#121c2a_50%,#111922_68%,#0d161c_100%)]">
        <div className="absolute inset-y-0 left-0 w-1/2 bg-[linear-gradient(180deg,#0f1820_0%,#101a23_50%,#15212d_75%,#172433_100%)] [mask-image:linear-gradient(90deg,#000_10%,transparent)]" />
        <Wallpaper />

        <section className="relative flex flex-col gap-3 pr-[23px] pl-[21px] text-[30px] leading-[35px] text-[#f7f9fb]">
          <Message tail shape="rounded-t-[29px] rounded-br-[29px] pt-[13px] pb-[7px]">
            <div className="mb-[5px]">
              <Author scrolledOff />
            </div>
            <p>Get Ready for CPI News signals.</p>
            <div className="mt-1.5">
              <Meta views={28} time="3:56 PM" />
            </div>
          </Message>

          <Message tail shape="rounded-t-[29px] rounded-br-[29px] pt-[13px] pb-[7px]">
            <div className="mb-[5px]">
              <Author />
            </div>
            <p className="whitespace-pre-wrap">
              {"Gold  Buy limit 1932 -1930\n\nTP 1935\nTP 1938\nTP 1941\nTP 1944\nTP 1947\nTP 1950\n\nSL. 1922"}
            </p>
            <div className="mt-3.5 flex items-end justify-between gap-[29px]">
              <div className="mb-2 -ml-1 flex gap-2">
                <Reaction active count={1}>
                  <ThumbsUp className="h-[38px] w-9" />
                </Reaction>
                <Reaction count={1}>
                  <Heart />
                </Reaction>
              </div>
              <Meta views={7} time="5:08 PM" />
            </div>
          </Message>

          {/* replies sent in a row sit closer together */}
          <div className="flex flex-col gap-1">
            <Message wide shareMargin="mb-[15px]" shape="rounded-t-[29px] rounded-br-[29px] rounded-bl-[10px] pt-[13px] pb-[9px]">
              <div className="mb-[11px]">
                <Author />
              </div>
              <Quote />
              <p>
                TP 4 Hit successfully done <Check />
              </p>
              <p>
                100+pips running profit done <Checks count={4} />
              </p>
              <div className="mt-1">
                <Meta views={6} time="5:34 PM" />
              </div>
            </Message>

            <Message wide shareMargin="mb-[15px]" shape="rounded-r-[29px] rounded-l-[10px] pt-[21px] pb-[9px]">
              <Quote />
              <p className="whitespace-pre-wrap">
                {"TP 5  Hit successfully done "}
                <ThumbsUp />
              </p>
              <p>
                130+pips running profit done <ThumbsUp />
                <Checks count={3} />
              </p>
              <div className="mt-[3px] flex items-end justify-between">
                <div className="flex pb-px">
                  <Checks count={6} />
                </div>
                <Meta views={5} time="5:38 PM" />
              </div>
            </Message>

            <Message wide tail shareMargin="mb-[9px]" shape="rounded-r-[29px] rounded-tl-[10px] pt-[21px] pb-[9px]">
              <Quote />
              <p>
                All TP Hit successfully done <ThumbsUp />
              </p>
              <p>
                160+pips running profit done <Checks count={4} />
              </p>
              <div className="mt-[3px] flex items-end justify-between">
                <div className="flex pb-px">
                  <Checks count={9} />
                </div>
                <Meta views={4} time="5:40 PM" />
              </div>
            </Message>
          </div>
        </section>
      </main>

      <Composer />
      <NavBar />
    </div>
  );
}
